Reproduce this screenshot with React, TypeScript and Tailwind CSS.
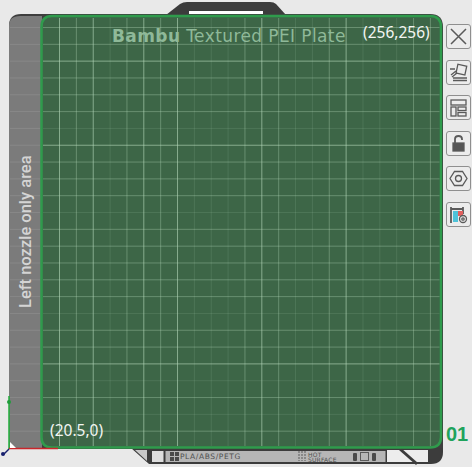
import type { ReactNode } from "react";

const OPACITY = { B: 0.62, M: 0.36, F: 0.14 };
const verticalPattern = "BMBFMBMBFFFMBMFFMBFFFMM";
const horizontalPattern = "MMBMMMFBMMMFMMMMMFMMBFMFM";

function Board() {
  return (
    <svg width="446" height="467" viewBox="0 0 446 467" className="block">
      <path d="M166 15 L180 4 Q183 2 187 2 H270 Q274 2 276 4 L286 15 Z" fill="#3c3c3c" />
      <rect x="189" y="11" width="74" height="4" fill="#ffffff" />
      <path d="M9 449 V26 Q9 14 21 14 H430 Q443 14 443 27 V449 Z" fill="#3e3e3e" />
      <path d="M131 448 H443 V452 Q443 464 431 464 H149 Z" fill="#3c3c3c" />
      <path d="M135 450 H147 V461 Z" fill="#c8c8c8" />
      <rect x="152" y="451" width="11.5" height="11" fill="#dedede" />
      <rect x="165.5" y="451" width="220" height="11" fill="#b6b6b6" />
      <rect x="387" y="450" width="41" height="12" fill="#ededed" />
      <path d="M400 449 L417 464" stroke="#3c3c3c" strokeWidth="3" />
      <path d="M9 26 Q9 16 20 16 H42 V448 H9 Z" fill="#7b7b7b" />
      <path d="M41.5 27 Q41.5 16 52 16 H430 Q441 16 441 27 V437 Q441 447.5 430 447.5 H52 Q41.5 447.5 41.5 437 Z" fill="#3d6647" stroke="#2f9b4c" strokeWidth="2.5" />
      {Array.from(horizontalPattern).map((_, i) => (
        <line key={`g${i}`} x1="10" x2="40" y1={27.5 + i * 16.82} y2={27.5 + i * 16.82} stroke="#9a9a9a" strokeWidth="1" strokeOpacity="0.45" />
      ))}
      {Array.from(verticalPattern).map((k, i) => (
        <line key={`v${i}`} x1={59.5 + i * 16.86} x2={59.5 + i * 16.86} y1="18" y2="446" stroke="#b4d8ba" strokeWidth="1" strokeOpacity={OPACITY[k as "B"]} />
      ))}
      {Array.from(horizontalPattern).map((k, i) => (
        <line key={`h${i}`} x1="43" x2="439.5" y1={27.5 + i * 16.82} y2={27.5 + i * 16.82} stroke="#b4d8ba" strokeWidth="1" strokeOpacity={OPACITY[k as "B"]} />
      ))}
      <path d="M9 449 V396" stroke="#1fae3a" strokeWidth="1.5" />
      <circle cx="9" cy="402" r="2" fill="#1f9c3a" />
      <path d="M9 448.5 H58" stroke="#c9262b" strokeWidth="1.5" />
      <path d="M9 449 L3 455" stroke="#17206e" strokeWidth="1.5" />
      <circle cx="3" cy="454" r="2" fill="#17206e" />
      <path d="M10 448 V442 L16 448 Z" fill="#ffffff" />
      <path d="M299 451 V461 M302 451 V461 M305 451 V461" stroke="#5a5a5a" strokeWidth="1" strokeDasharray="2 1" />
      <rect x="170" y="452" width="4" height="4" fill="#4a4a4a" />
      <rect x="175" y="452" width="4" height="4" fill="#4a4a4a" />
      <rect x="170" y="457" width="4" height="4" fill="#4a4a4a" />
      <rect x="175" y="457" width="4" height="4" fill="#4a4a4a" />
      <rect x="353" y="453" width="4" height="8" rx="1" fill="#4a4a4a" />
      <rect x="360.5" y="452.5" width="8" height="8" fill="none" stroke="#5a5a5a" />
      <rect x="372" y="453" width="4" height="8" rx="1" fill="#4a4a4a" />
    </svg>
  );
}

function ToolButton({ children }: { children: ReactNode }) {
  return (
    <button className="flex h-[25px] w-[25px] items-center justify-center rounded-[3px] border border-[#8f8f8f] bg-[#ececec] p-0">
      <svg width="21" height="21" viewBox="0 0 21 21" fill="none" stroke="#5a5a5a" strokeWidth="1.3">
        {children}
      </svg>
    </button>
  );
}

export default function App() {
  return (
    <div className="relative flex h-[467px] w-[472px] overflow-hidden bg-[#e9e9e9] font-['Liberation_Sans',sans-serif]">
      <div className="relative h-[467px] w-[446px] shrink-0">
        <Board />
        <span className="absolute left-[112px] top-[26px] whitespace-nowrap font-['DejaVu_Sans',sans-serif] text-[17px] leading-[20px] tracking-[0.4px] text-[#8fb999]">
          <span className="font-bold">Bambu</span> Textured PEI Plate
        </span>
        <span className="absolute left-[363px] top-[22px] whitespace-nowrap font-['Noto_Sans',sans-serif] text-[15.5px] leading-[20px] text-[#f2f5f2]">(256,256)</span>
        <span className="absolute left-[50px] top-[420px] whitespace-nowrap font-['Noto_Sans',sans-serif] text-[15.5px] leading-[20px] text-[#f2f5f2]">(20.5,0)</span>
        <span className="absolute left-[16px] top-[308px] origin-top-left -rotate-90 whitespace-nowrap font-['Roboto',sans-serif] text-[16.5px] font-medium leading-[20px] text-[#d4d4d4]">Left nozzle only area</span>
        <span className="absolute left-[180px] top-[451px] whitespace-nowrap font-['DejaVu_Sans',sans-serif] text-[7.5px] leading-[11px] tracking-[0.6px] text-[#4f4f4f]">PLA/ABS/PETG</span>
        <span className="absolute left-[308px] top-[452px] whitespace-pre font-['DejaVu_Sans',sans-serif] text-[6px] leading-[5px] tracking-[0.2px] text-[#4f4f4f]">{"HOT\nSURFACE"}</span>
      </div>
      <div className="flex-1 pt-[24px]">
        <div className="flex flex-col gap-[10.5px]">
          <ToolButton>
            <path d="M3 3 L18 18 M18 3 L3 18" strokeWidth="1.5" />
          </ToolButton>
          <ToolButton>
            <rect x="9" y="3" width="9" height="9" transform="rotate(12 13 7)" />
            <path d="M5 18.5 H19 M5 16 H19" />
            <path d="M2 7 H7 M3 13 L8 9 M4 15 L9 11" />
          </ToolButton>
          <ToolButton>
            <rect x="3" y="3" width="15" height="5" />
            <rect x="3" y="10" width="5" height="9" />
            <rect x="10" y="10" width="8" height="3.5" />
            <rect x="10" y="15.5" width="8" height="3.5" />
          </ToolButton>
          <ToolButton>
            <rect x="5" y="10" width="11" height="8" fill="#555555" />
            <path d="M7 10 V6 Q7 3 10.5 3 Q14 3 14 6 V7" strokeWidth="1.8" />
          </ToolButton>
          <ToolButton>
            <path d="M6.5 3.5 H14.5 L19 10.5 L14.5 17.5 H6.5 L2 10.5 Z" />
            <circle cx="10.5" cy="10.5" r="3" />
          </ToolButton>
          <ToolButton>
            <path d="M3 3 V19 M15 3 V10 M3 5 H15" strokeWidth="1.8" />
            <rect x="5" y="7" width="5" height="11" fill="#4fc3d9" stroke="none" />
            <rect x="10" y="7" width="5" height="5" fill="#e2605f" stroke="none" />
            <circle cx="15" cy="15" r="3.5" fill="#ececec" />
            <circle cx="15" cy="15" r="1.2" />
          </ToolButton>
        </div>
      </div>
      <span className="absolute left-[446px] top-[423px] text-[20px] font-bold leading-[22px] text-[#1fa35c]">01</span>
    </div>
  );
}
